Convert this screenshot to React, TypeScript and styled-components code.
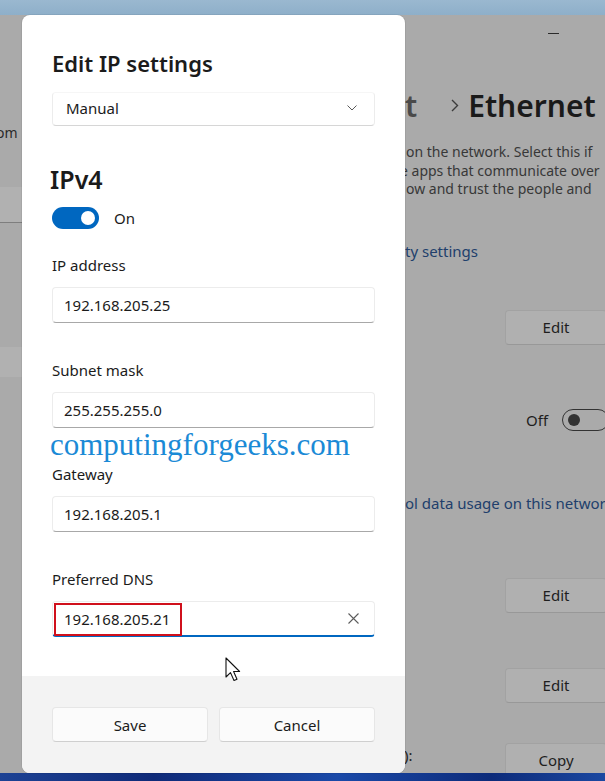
import React from "react";
import styled, { createGlobalStyle } from "styled-components";

const GlobalStyle = createGlobalStyle`
  html, body { margin: 0; padding: 0; }
  body {
    width: 605px;
    height: 781px;
    overflow: hidden;
    font-family: "Noto Sans", "Segoe UI", sans-serif;
    -webkit-font-smoothing: antialiased;
  }
  #root { width: 605px; height: 781px; }
`;

const Screen = styled.div`
  position: relative;
  width: 605px;
  height: 781px;
  display: grid;
  grid-template-rows: 15px 758px 8px;
  background: #aaaaaa;
  overflow: hidden;
`;

const DesktopStrip = styled.div`
  background: linear-gradient(180deg, #9ab8d0, #8eafc9);
`;

const Taskbar = styled.div`
  background: linear-gradient(90deg, #1d4294 0%, #0f2a78 25%, #1a49a8 55%, #0d2b7a 80%, #1c4aa4 100%);
`;

const Middle = styled.div`
  display: flex;
  min-height: 0;
`;

/* ---------- background window, left edge ---------- */
const LeftEdge = styled.div`
  width: 22px;
  flex: none;
  overflow: hidden;
  display: flex;
  flex-direction: column;
`;

const EdgeText = styled.div`
  margin-top: 108px;
  margin-left: -4px;
  font-size: 14px;
  line-height: 20px;
  color: #2a2a2a;
  white-space: nowrap;
`;

const EdgeBand = styled.div<{ $top: number; $h: number; $line?: boolean }>`
  margin-top: ${(p) => p.$top}px;
  height: ${(p) => p.$h}px;
  background: #b1b1b1;
  border-bottom: ${(p) => (p.$line ? "1px solid #7e7e7e" : "none")};
  flex: none;
`;

/* ---------- dialog ---------- */
const Dialog = styled.div`
  position: relative;
  width: 383px;
  flex: none;
  background: #ffffff;
  border-radius: 8px;
  overflow: hidden;
  display: flex;
  flex-direction: column;
  box-shadow: 0 0 0 1px rgba(0, 0, 0, 0.06);
`;

const Body = styled.div`
  flex: 1;
  padding: 34px 30px 0 30px;
  display: flex;
  flex-direction: column;
`;

const Title = styled.h1`
  margin: 0;
  font-size: 22px;
  line-height: 28px;
  font-weight: 600;
  color: #1b1b1b;
`;

const Select = styled.div`
  margin-top: 15px;
  height: 34px;
  box-sizing: border-box;
  border: 1px solid #ececec;
  border-top-color: #f6f6f6;
  border-bottom-color: #d6d6d6;
  border-radius: 4px;
  display: flex;
  align-items: center;
  justify-content: space-between;
  padding: 0 17px 2px 13px;
  font-size: 15px;
  color: #1b1b1b;
`;

const SectionTitle = styled.h2`
  margin: 38px 0 0 -2px;
  font-size: 25px;
  line-height: 30px;
  font-weight: 600;
  color: #1b1b1b;
`;

const ToggleRow = styled.div`
  margin-top: 13px;
  display: flex;
  align-items: center;
  gap: 15px;
  font-size: 15px;
  color: #1b1b1b;
`;

const Toggle = styled.div<{ $on: boolean }>`
  position: relative;
  width: 47px;
  height: 22px;
  box-sizing: border-box;
  border-radius: 11px;
  background: ${(p) => (p.$on ? "#0067c0" : "transparent")};
  border: ${(p) => (p.$on ? "none" : "1px solid #3a3a3a")};
  display: flex;
  align-items: center;
  justify-content: ${(p) => (p.$on ? "flex-end" : "flex-start")};
  padding: 0 4px;
  flex: none;
`;

const Knob = styled.span<{ $on: boolean }>`
  width: ${(p) => (p.$on ? 14 : 12)}px;
  height: ${(p) => (p.$on ? 14 : 12)}px;
  border-radius: 50%;
  background: ${(p) => (p.$on ? "#ffffff" : "#3a3a3a")};
`;

const Label = styled.div<{ $first?: boolean }>`
  margin-top: ${(p) => (p.$first ? "26px" : "36.67px")};
  font-size: 15px;
  line-height: 20px;
  color: #1b1b1b;
`;

const Field = styled.div<{ $focused?: boolean }>`
  position: relative;
  margin-top: 12px;
  height: 36px;
  box-sizing: border-box;
  border: 1px solid #ececec;
  border-bottom: ${(p) => (p.$focused ? "2px solid #0067c0" : "1px solid #a8a8a8")};
  border-radius: 4px;
  display: flex;
  align-items: center;
  justify-content: space-between;
  padding: ${(p) => (p.$focused ? "1px 15px 0 11px" : "0 15px 0 11px")};
  font-size: 15px;
  color: #1b1b1b;
  background: #ffffff;
`;

const Highlight = styled.span`
  position: absolute;
  left: 1px;
  top: 1px;
  width: 128px;
  height: 33px;
  box-sizing: border-box;
  border: 2px solid #d0101c;
  pointer-events: none;
`;

const Watermark = styled.div`
  position: absolute;
  left: 28px;
  top: 414px;
  font-family: "Liberation Serif", "Times New Roman", serif;
  font-size: 31px;
  line-height: 31px;
  color: #1b8ad6;
  white-space: nowrap;
  pointer-events: none;
`;

const Footer = styled.div`
  flex: none;
  height: 97px;
  box-sizing: border-box;
  background: #f3f3f3;
  padding: 31px 30px;
  display: grid;
  grid-template-columns: 1fr 1fr;
  gap: 11px;
`;

const Button = styled.button`
  height: 35px;
  margin: 0;
  box-sizing: border-box;
  border: 1px solid #e6e6e6;
  border-bottom-color: #cfcfcf;
  border-radius: 4px;
  background: #fbfbfb;
  font-family: inherit;
  font-size: 15px;
  color: #1b1b1b;
  padding: 0;
`;

/* ---------- background window, right side ---------- */
const RightSide = styled.div`
  flex: 1;
  min-width: 0;
  overflow: hidden;
  display: flex;
  flex-direction: column;
`;

const Minimize = styled.div`
  margin: 18px 0 0 143px;
  width: 11px;
  height: 1px;
  background: #2a2a2a;
  flex: none;
`;

const Breadcrumb = styled.div`
  margin-top: 51px;
  height: 40px;
  display: flex;
  align-items: center;
  font-size: 30px;
  font-weight: 600;
  white-space: nowrap;
  color: #1a1a1a;
`;

const Crumb = styled.span<{ $muted?: boolean }>`
  color: ${(p) => (p.$muted ? "#4a4a4a" : "#1a1a1a")};
`;

const CrumbSep = styled.span`
  display: flex;
  margin: 0 9px 0 34px;
`;

const Para = styled.div`
  margin-top: 18px;
  font-size: 14px;
  line-height: 18.5px;
  color: #383838;
  white-space: nowrap;
`;

const ParaLine = styled.div<{ $shift: number }>`
  margin-left: ${(p) => p.$shift}px;
`;

const Link = styled.div<{ $top: number }>`
  margin-top: ${(p) => p.$top}px;
  font-size: 15px;
  line-height: 20px;
  color: #213f6c;
  white-space: nowrap;
`;

const BgButton = styled.div<{ $top: number; $left?: number }>`
  margin: ${(p) => p.$top}px 0 0 ${(p) => p.$left ?? 100}px;
  width: 102px;
  height: 35px;
  flex: none;
  box-sizing: border-box;
  border: 1px solid #a2a2a2;
  border-bottom-color: #989898;
  border-radius: 4px;
  background: #b0b0b0;
  display: flex;
  align-items: center;
  justify-content: center;
  font-size: 15px;
  color: #1e1e1e;
`;

const OffRow = styled.div`
  margin: 63px 0 0 121px;
  height: 24px;
  display: flex;
  align-items: center;
  gap: 14px;
  font-size: 15px;
  color: #1e1e1e;
  flex: none;
`;

const BgToggle = styled.div`
  width: 47px;
  height: 22px;
  box-sizing: border-box;
  border: 1px solid #333333;
  border-radius: 11px;
  display: flex;
  align-items: center;
  padding-left: 5px;
  flex: none;
`;

const BgKnob = styled.span`
  width: 12px;
  height: 12px;
  border-radius: 50%;
  background: #333333;
`;

const LastRow = styled.div`
  margin-top: 40px;
  display: grid;
  grid-template-columns: 100px 102px;
  align-items: start;
  flex: none;
`;

const LastText = styled.span`
  margin: 2px 0 0 -1px;
  font-size: 15px;
  line-height: 20px;
  color: #1e1e1e;
`;

const Cursor = styled.svg`
  position: absolute;
  left: 225px;
  top: 657px;
  pointer-events: none;
`;

const Chevron = () => (
  <svg width="10" height="6" viewBox="0 0 10 6">
    <polyline points="0.5,0.5 5,5 9.5,0.5" fill="none" stroke="#5a5a5a" strokeWidth="1" />
  </svg>
);

const ClearIcon = () => (
  <svg width="11" height="11" viewBox="0 0 11 11">
    <path d="M0.5 0.5 L10.5 10.5 M10.5 0.5 L0.5 10.5" stroke="#5c5c5c" strokeWidth="1.1" />
  </svg>
);

const fields = [
  { label: "IP address", value: "192.168.205.25" },
  { label: "Subnet mask", value: "255.255.255.0" },
  { label: "Gateway", value: "192.168.205.1" },
];

export default function App() {
  return (
    <>
      <GlobalStyle />
      <Screen>
        <DesktopStrip />
        <Middle>
          <LeftEdge>
            <EdgeText>om</EdgeText>
            <EdgeBand $top={44} $h={35} $line />
            <EdgeBand $top={124} $h={30} />
          </LeftEdge>

          <Dialog>
            <Body>
              <Title>Edit IP settings</Title>
              <Select>
                <span>Manual</span>
                <Chevron />
              </Select>
              <SectionTitle>IPv4</SectionTitle>
              <ToggleRow>
                <Toggle $on>
                  <Knob $on />
                </Toggle>
                <span>On</span>
              </ToggleRow>
              {fields.map((f, i) => (
                <React.Fragment key={f.label}>
                  <Label $first={i === 0}>{f.label}</Label>
                  <Field>
                    <span>{f.value}</span>
                  </Field>
                </React.Fragment>
              ))}
              <Label>Preferred DNS</Label>
              <Field $focused>
                <span>192.168.205.21</span>
                <ClearIcon />
                <Highlight />
              </Field>
            </Body>
            <Footer>
              <Button>Save</Button>
              <Button>Cancel</Button>
            </Footer>
            <Watermark>computingforgeeks.com</Watermark>
          </Dialog>

          <RightSide>
            <Minimize />
            <Breadcrumb>
              <Crumb $muted>t</Crumb>
              <CrumbSep>
                <svg width="8" height="13" viewBox="0 0 8 13">
                  <polyline points="1,1 6.5,6.5 1,12" fill="none" stroke="#3c3c3c" strokeWidth="1.4" />
                </svg>
              </CrumbSep>
              <Crumb>Ethernet</Crumb>
            </Breadcrumb>
            <Para>
              <ParaLine $shift={1}>on the network. Select this if</ParaLine>
              <ParaLine $shift={-5}>e apps that communicate over</ParaLine>
              <ParaLine $shift={1}>ow and trust the people and</ParaLine>
            </Para>
            <Link $top={42}>ty settings</Link>
            <BgButton $top={49}>Edit</BgButton>
            <OffRow>
              <span>Off</span>
              <BgToggle>
                <BgKnob />
              </BgToggle>
            </OffRow>
            <Link $top={61}>ol data usage on this network</Link>
            <BgButton $top={65}>Edit</BgButton>
            <BgButton $top={55}>Edit</BgButton>
            <LastRow>
              <LastText>):</LastText>
              <BgButton $top={0} $left={0}>Copy</BgButton>
            </LastRow>
          </RightSide>
        </Middle>
        <Taskbar />
        <Cursor width="17" height="26" viewBox="0 0 17 26">
          <path
            d="M1 1 L1 20 L5.5 15.6 L9 23.5 L12 22.2 L8.6 14.5 L14.6 14.5 Z"
            fill="#ffffff"
            stroke="#111111"
            strokeWidth="1.1"
            strokeLinejoin="round"
          />
        </Cursor>
      </Screen>
    </>
  );
}
